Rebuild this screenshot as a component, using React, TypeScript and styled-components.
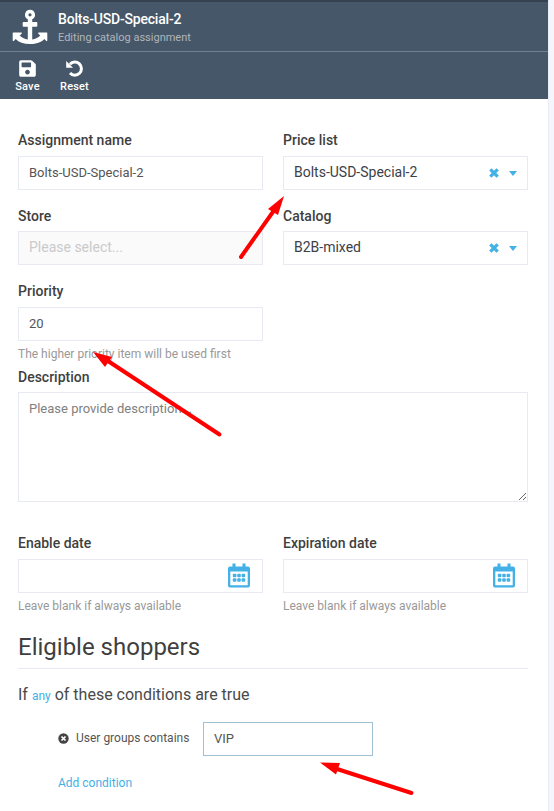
import React from "react";
import styled, { createGlobalStyle } from "styled-components";
import { FaSave } from "react-icons/fa";

const GlobalStyle = createGlobalStyle`
  * { box-sizing: border-box; }
  body { margin: 0; background: #f4f6fb; font-family: Roboto, "Liberation Sans", sans-serif; }
`;

const Blade = styled.div`
  position: relative;
  width: 549px;
  height: 811px;
  overflow: hidden;
  background: #fff;
  border-right: 1px solid #e8ecf6;
`;

const Header = styled.header`
  width: 548px;
  height: 99px;
  background: #465769;
  border-top: 2px solid #36424f;
  color: #fff;
`;

const TitleBar = styled.div`
  display: flex;
  height: 50px;
  padding: 7px 0 0 12px;
  border-bottom: 1px solid #70808e;
`;

const AnchorSvg = styled.svg`
  width: 36px;
  height: 36px;
`;

const Titles = styled.div`
  padding: 1px 0 0 10px;
`;

const Title = styled.h1`
  margin: 0;
  font-size: 14px;
  font-weight: 500;
  line-height: 18px;
  letter-spacing: -0.2px;
`;

const Subtitle = styled.div`
  padding-top: 1px;
  font-size: 11px;
  line-height: 18px;
  color: #b0b5ba;
`;

const Toolbar = styled.nav`
  display: flex;
  padding: 7px 0 0 5px;
`;

const ToolButton = styled.button<{ $width: number }>`
  display: flex;
  flex-direction: column;
  align-items: center;
  width: ${(p) => p.$width}px;
  padding: 0;
  border: 0;
  background: none;
  color: #fff;
  font: 500 11px/14px Roboto, sans-serif;
  letter-spacing: 0.15px;
  svg { width: 19px; height: 19px; margin-bottom: 2px; }
`;

const Content = styled.form`
  padding: 32px 20px 0 18px;
`;

const Columns = styled.div<{ $height: number; $top?: number }>`
  display: grid;
  grid-template-columns: 245px 245px;
  column-gap: 20px;
  height: ${(p) => p.$height}px;
  padding-top: ${(p) => p.$top ?? 0}px;
`;

const Field = styled.div<{ $labelGap?: number }>`
  display: flex;
  flex-direction: column;
  gap: ${(p) => p.$labelGap ?? 7}px;
`;

const Label = styled.label`
  height: 18px;
  font-size: 14px;
  line-height: 18px;
  font-weight: 500;
  color: #3f3f3f;
`;

const Control = styled.div<{ $disabled?: boolean; $large?: boolean }>`
  display: flex;
  align-items: center;
  height: 34px;
  padding: 0 10px;
  border: 1px solid #e8eaf3;
  background: ${(p) => (p.$disabled ? "#fafafa" : "#fff")};
  color: ${(p) => (p.$disabled ? "#c9cacb" : p.$large ? "#3c4148" : "#555")};
  font-size: ${(p) => (p.$large ? 14 : 13)}px;
  line-height: 18px;
`;

const Input = styled.input<{ $focused?: boolean }>`
  height: 34px;
  width: 100%;
  padding: 0 10px 2px;
  border: 1px solid ${(p) => (p.$focused ? "#a0bfd2" : "#e8eaf3")};
  border-radius: 0;
  outline: none;
  background: #fff;
  color: #555;
  font: 13px/18px Roboto, sans-serif;
`;

const Value = styled.span`
  flex: 1;
  padding-bottom: 2px;
`;

const ClearIcon = styled.svg`
  width: 10px;
  height: 10px;
  margin-right: 10px;
`;

const Caret = styled.span<{ $muted?: boolean }>`
  border: 4px solid transparent;
  border-top: 5px solid ${(p) => (p.$muted ? "#eef5f9" : "#43b0e6")};
  border-bottom: 0;
`;

const Hint = styled.div`
  margin-top: -3px;
  font-size: 12px;
  line-height: 18px;
  color: #999;
`;

const TextArea = styled.textarea`
  display: block;
  width: 510px;
  height: 110px;
  padding: 7px 10px;
  border: 1px solid #e8eaf3;
  border-radius: 0;
  outline: none;
  resize: both;
  font: 13px/18px Roboto, sans-serif;
  &::placeholder { color: #808080; }
`;

const CalendarIcon = styled.svg`
  width: 22px;
  height: 25px;
  margin: -1px 2px 1px auto;
`;

const SectionTitle = styled.h2`
  height: 42px;
  margin: 0;
  padding-top: 6px;
  border-bottom: 1px solid #e8eaf3;
  font-size: 24px;
  line-height: 28px;
  font-weight: 400;
  color: #3f3f3f;
`;

const Rule = styled.p`
  margin: 15px 0 0;
  height: 22px;
  font-size: 16px;
  line-height: 22px;
  color: #4a4a4a;
`;

const Link = styled.a`
  color: #43b0e6;
  font-size: 12px;
`;

const Conditions = styled.div`
  padding-left: 40px;
`;

const Condition = styled.div`
  display: grid;
  grid-template-columns: 18px 127px 170px;
  align-items: center;
  margin: 16px 0;
  font-size: 12px;
  color: #555;
`;

const ConditionText = styled.span`
  padding-bottom: 2px;
`;

const RemoveIcon = styled.svg`
  width: 11px;
  height: 11px;
  margin-bottom: 2px;
`;

const Arrows = styled.svg`
  position: absolute;
  inset: 0;
  pointer-events: none;
`;

function AnchorIcon() {
  return (
    <AnchorSvg viewBox="0 0 36 36" fill="#fff">
      <path
        fillRule="evenodd"
        d="M18 .8a5 5 0 0 1 2.200 9.500v2.700h4.300a.8.8 0 0 1 .8.8v3.200a.8.8 0 0 1-.8.800h-4.300v12.600c3.300-.4 6.200-1.900 8-3.900l-2-2a.6.6 0 0 1 .4-1h8.200a.5.500 0 0 1 .5.500v7.600a.6.600 0 0 1-1 .4l-2-2c-3 3.200-8 5-14.300 5s-11.300-1.800-14.300-5l-2 2a.6.600 0 0 1-1-.4V24a.5.500 0 0 1 .5-.5h8.200a.6.600 0 0 1 .4 1l-2 2c1.800 2 4.700 3.500 8 3.900V17.800h-4.300a.8.800 0 0 1-.8-.8v-3.200a.8.800 0 0 1 .8-.8h4.300v-2.700A5 5 0 0 1 18 .8zM18 4.200a1.600 1.600 0 1 0 0 3.200a1.600 1.600 0 0 0 0-3.200z"
      />
    </AnchorSvg>
  );
}

function ResetIcon() {
  return (
    <svg viewBox="0 0 19 19" fill="none">
      <path d="M4.900 5.200A6.600 6.600 0 1 1 5 14.100" stroke="#fff" strokeWidth="3" />
      <path d="M1.200 2v6.200a.6.6 0 0 0 .6.600H8z" fill="#fff" />
    </svg>
  );
}

function SelectField({ label, value, gap }: { label: string; value: string; gap?: number }) {
  return (
    <Field $labelGap={gap}>
      <Label>{label}</Label>
      <Control $large>
        <Value>{value}</Value>
        <ClearIcon viewBox="0 0 10 10">
          <path d="M1.300 1.300 8.700 8.700M8.700 1.300 1.300 8.700" stroke="#43b0e6" strokeWidth="3.200" />
        </ClearIcon>
        <Caret />
      </Control>
    </Field>
  );
}

function DateField({ label }: { label: string }) {
  return (
    <Field>
      <Label>{label}</Label>
      <Control>
        <CalendarIcon viewBox="0 0 22 25" fill="#43b0e6">
          <path
            fillRule="evenodd"
            d="M4.500 0.500h3v3h7v-3h3v3H20a2 2 0 0 1 2 2v17a2 2 0 0 1-2 2H2a2 2 0 0 1-2-2v-17a2 2 0 0 1 2-2h2.500zM2.300 8.500v13.800h17.400V8.500z"
          />
          {[6.6, 11, 15.4].map((x) =>
            [12.5, 17].map((y) => (
              <rect key={`${x}-${y}`} x={x - 1.8} y={y - 1.8} width="3.600" height="3.600" rx="1" />
            ))
          )}
        </CalendarIcon>
      </Control>
      <Hint>Leave blank if always available</Hint>
    </Field>
  );
}

function Arrow({ from, to, head }: { from: string; to: string; head: string }) {
  return (
    <g>
      <path d={`M${from}L${to}`} stroke="red" strokeWidth="4" strokeLinecap="round" />
      <polygon points={head} fill="red" />
    </g>
  );
}

export default function App() {
  return (
    <>
      <GlobalStyle />
      <Blade>
        <Header>
          <TitleBar>
            <AnchorIcon />
            <Titles>
              <Title>Bolts-USD-Special-2</Title>
              <Subtitle>Editing catalog assignment</Subtitle>
            </Titles>
          </TitleBar>
          <Toolbar>
            <ToolButton $width={45}><FaSave />Save</ToolButton>
            <ToolButton $width={49}><ResetIcon />Reset</ToolButton>
          </Toolbar>
        </Header>
        <Content>
          <Columns $height={76}>
            <Field>
              <Label>Assignment name</Label>
              <Input defaultValue="Bolts-USD-Special-2" />
            </Field>
            <SelectField label="Price list" value="Bolts-USD-Special-2" />
          </Columns>
          <Columns $height={75}>
            <Field $labelGap={6}>
              <Label>Store</Label>
              <Control $large $disabled><Value>Please select...</Value><Caret $muted /></Control>
            </Field>
            <SelectField label="Catalog" value="B2B-mixed" gap={6} />
          </Columns>
          <Columns $height={86}>
            <Field>
              <Label>Priority</Label>
              <Input defaultValue="20" />
              <Hint>The higher priority item will be used first</Hint>
            </Field>
          </Columns>
          <Field $labelGap={6}>
            <Label>Description</Label>
            <TextArea placeholder="Please provide description..." />
          </Field>
          <Columns $height={125} $top={32}>
            <DateField label="Enable date" />
            <DateField label="Expiration date" />
          </Columns>
          <SectionTitle>Eligible shoppers</SectionTitle>
          <Rule>If <Link>any</Link> of these conditions are true</Rule>
          <Conditions>
            <Condition>
              <RemoveIcon viewBox="0 0 11 11">
                <circle cx="5.500" cy="5.500" r="5.200" fill="#444" />
                <path d="M3.500 3.500l4 4M7.500 3.500l-4 4" stroke="#fff" strokeWidth="1.700" />
              </RemoveIcon>
              <ConditionText>User groups contains</ConditionText>
              <Input $focused defaultValue="VIP" />
            </Condition>
            <Link>Add condition</Link>
          </Conditions>
        </Content>
        <Arrows width="549" height="811">
          <Arrow from="241 257" to="275 209" head="284,196 268,209 278,215" />
          <Arrow from="219.500 434.500" to="108 361" head="93,352 112,357 105,367" />
          <Arrow from="411.500 793" to="337 769" head="320,762.500 340,763 336,774.500" />
        </Arrows>
      </Blade>
    </>
  );
}
